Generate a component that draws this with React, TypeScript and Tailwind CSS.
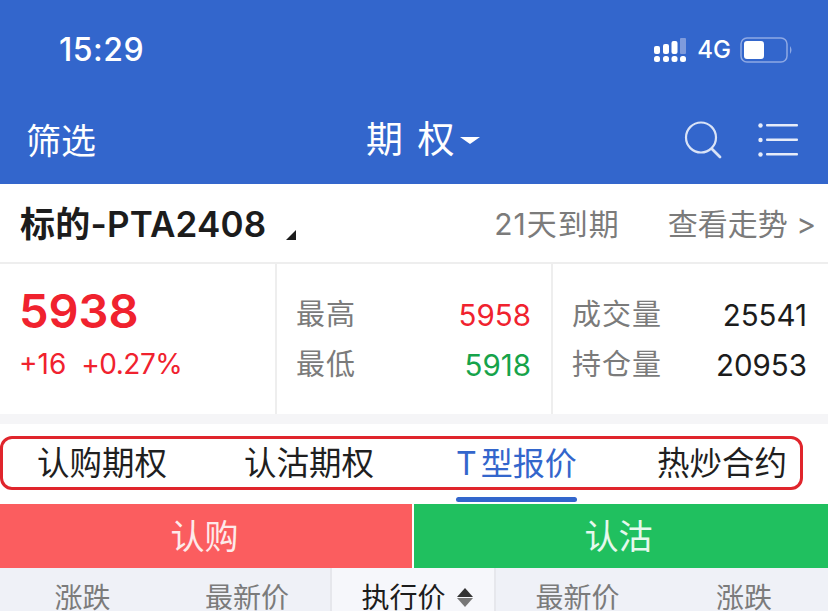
import React from 'react';

const FONT = "font-['Inter','Noto_Sans_CJK_SC',sans-serif]";

const SignalIcon = () => (
  <svg width="34" height="24" viewBox="0 0 34 24" fill="#fff">
    <rect x="0" y="8" width="6" height="8" rx="2" />
    <rect x="9" y="6" width="6" height="10" rx="2" />
    <rect x="17.500" y="3" width="6" height="13" rx="2" />
    <rect x="26" y="0" width="6" height="16" rx="1" fill="#7f9bdc" />
    <rect x="0" y="18" width="6" height="6" rx="2.500" />
    <rect x="9" y="18" width="6" height="6" rx="2.500" />
    <rect x="17.500" y="18" width="6" height="6" rx="2.500" />
    <rect x="26" y="18" width="6" height="6" rx="2.500" />
  </svg>
);

const BatteryIcon = () => (
  <svg width="54" height="26" viewBox="0 0 54 26">
    <rect x="1" y="1" width="46" height="24" rx="6" fill="none" stroke="#8fa9e4" strokeWidth="1.500" />
    <rect x="4" y="4" width="20" height="18" rx="3" fill="#fff" />
    <path d="M50 9 q3 4 0 8 z" fill="#8fa9e4" />
  </svg>
);

const SearchIcon = () => (
  <svg width="38" height="38" viewBox="0 0 38 38" fill="none" stroke="#d9e3f7" strokeWidth="2.200" strokeLinecap="round">
    <circle cx="17" cy="16.500" r="15" />
    <path d="M28 28 L36 36" strokeWidth="2.800" />
  </svg>
);

const MenuIcon = () => (
  <svg width="40" height="36" viewBox="0 0 40 36" fill="#e6ecf9">
    <circle cx="2.500" cy="3.500" r="2.200" />
    <rect x="8" y="2" width="32" height="2.500" rx="1" />
    <circle cx="2.500" cy="18" r="2.200" />
    <rect x="8" y="16.500" width="32" height="2.500" rx="1" />
    <circle cx="2.500" cy="32.500" r="2.200" />
    <rect x="8" y="31" width="32" height="2.500" rx="1" />
  </svg>
);

const StatRow = ({ label, value, color }: { label: string; value: string; color: string }) => (
  <div className="flex items-center justify-between h-[50px]">
    <span className="text-[29px] text-[#7b7b7b] tracking-[1px]">{label}</span>
    <span className={`text-[29.500px] ${color}`}>{value}</span>
  </div>
);

export default function App() {
  return (
    <div className={`${FONT} relative w-[828px] h-[611px] overflow-hidden bg-white`}>
      <header className="h-[184px] bg-[#3366cc] text-white">
        <div className="h-[100px] flex items-center justify-between pl-[59px] pr-[34px]">
          <span className="text-[32px] font-medium tracking-[0.5px]">15:29</span>
          <div className="flex items-center gap-[9px]">
            <SignalIcon />
            <span className="text-[24px] font-medium">4G</span>
            <BatteryIcon />
          </div>
        </div>
        <div className="h-[84px] flex items-start pl-[26px] pr-[30px]">
          <span className="w-[340px] text-[35px] leading-[82px]">筛选</span>
          <div className="flex items-center h-[80px]">
            <span className="text-[37px] tracking-[2px]">期 权</span>
            <span className="w-0 h-0 ml-[4px] border-x-[10px] border-x-transparent border-t-[7px] border-t-white" />
          </div>
          <div className="flex items-center gap-[36px] h-[80px] ml-auto">
            <SearchIcon />
            <MenuIcon />
          </div>
        </div>
      </header>

      <div className="h-[80px] flex items-center justify-between pl-[20px] pr-[12px] border-b-2 border-[#eeeeee]">
        <div className="flex items-center mt-[3px]">
          <span className="text-[35px] font-semibold text-[#1c1c1c] tracking-[0.2px]">标的-PTA2408</span>
          <span className="w-0 h-0 ml-[20px] mt-[20px] border-l-[10px] border-l-transparent border-b-[10px] border-b-[#1c1c1c]" />
        </div>
        <div className="flex items-center gap-[48px] text-[30px] text-[#7b7b7b] mt-[3px]">
          <span className="tracking-[1px]">21天到期</span>
          <span>查看走势 &gt;</span>
        </div>
      </div>

      <div className="h-[150px] flex">
        <div className="w-[277px] pl-[19px] border-r-2 border-[#eeeeee]">
          <div className="text-[47px] font-semibold text-[#f0222e] leading-[57px] mt-[18px]">5938</div>
          <div className="flex gap-[15px] text-[28px] text-[#f0222e] mt-[4px]">
            <span>+16</span>
            <span className="tracking-[-0.5px]">+0.27%</span>
          </div>
        </div>
        <div className="w-[276px] pl-[19px] pr-[20px] pt-[26px] border-r-2 border-[#eeeeee]">
          <StatRow label="最高" value="5958" color="text-[#f0222e]" />
          <StatRow label="最低" value="5918" color="text-[#16a34a]" />
        </div>
        <div className="flex-1 pl-[19px] pr-[21px] pt-[26px]">
          <StatRow label="成交量" value="25541" color="text-[#1c1c1c]" />
          <StatRow label="持仓量" value="20953" color="text-[#1c1c1c]" />
        </div>
      </div>

      <div className="h-[10px] bg-[#f5f5f7]" />

      <nav className="relative h-[80px] text-[32.500px] text-[#1f1f1f]">
        <span className="absolute left-[37px] top-[16px]">认购期权</span>
        <span className="absolute left-[244px] top-[16px]">认沽期权</span>
        <span className="absolute left-[456px] top-[16px] text-[32px] text-[#3366cc] flex">
          <span className="mr-[4px]">T</span>
          <span>型报价</span>
        </span>
        <span className="absolute left-[657px] top-[16px]">热炒合约</span>
        <span className="absolute left-[456px] top-[73px] w-[121px] h-[5px] rounded-full bg-[#3366cc]" />
        <span className="absolute left-0 top-[12px] w-[803px] h-[54px] rounded-[12px] border-[3px] border-[#e0252c]" />
      </nav>

      <div className="h-[64px] flex text-[34px]">
        <div className="w-[412px] pr-[3px] bg-[#fb5d5f] text-[#fdeaea] flex items-center justify-center">认购</div>
        <div className="flex-1 ml-[2px] pr-[5px] bg-[#20c05f] text-[#e6f8ed] flex items-center justify-center">认沽</div>
      </div>

      <div className="h-[43px] flex bg-[#eff1f7] text-[28px] text-[#7b7b7b] leading-[60px]">
        <div className="w-[165px] text-center">涨跌</div>
        <div className="w-[165px] pr-[1px] text-center">最新价</div>
        <div className="w-[166px] flex justify-center gap-[11px] pl-[8px] bg-[#f6f7fb] border-x-2 border-[#e6e7ec] text-[#1c1c1c]">
          <span>执行价</span>
          <span className="flex flex-col gap-[1px] mt-[20px]">
            <span className="w-0 h-0 border-x-[8px] border-x-transparent border-b-[9px] border-b-[#333333]" />
            <span className="w-0 h-0 border-x-[8px] border-x-transparent border-t-[9px] border-t-[#777777]" />
          </span>
        </div>
        <div className="w-[166px] pr-[3px] text-center">最新价</div>
        <div className="flex-1 pr-[2px] text-center">涨跌</div>
      </div>
    </div>
  );
}
